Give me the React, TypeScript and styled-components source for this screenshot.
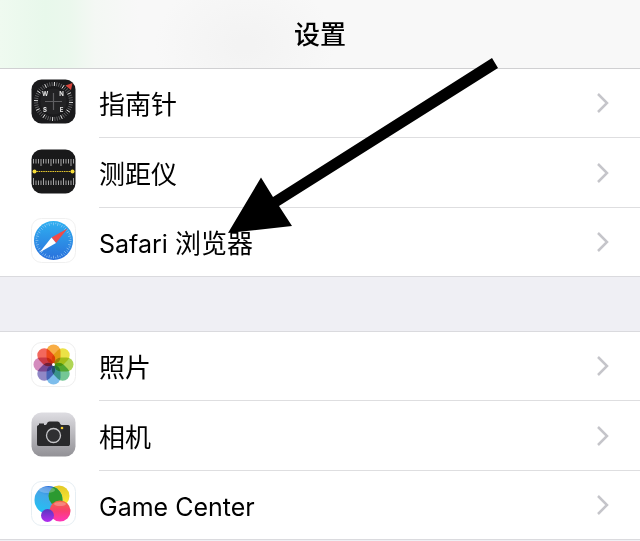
import React from "react";
import styled, { createGlobalStyle } from "styled-components";

const GlobalStyle = createGlobalStyle`
  * { box-sizing: border-box; }
  body {
    margin: 0;
    background: #efeff4;
    color: #000;
    font-family: Inter, "Noto Sans CJK SC", sans-serif;
  }
`;

const Page = styled.main`
  position: relative;
  min-height: 100vh;
  overflow: hidden;
`;

const NavBar = styled.header`
  display: flex;
  align-items: center;
  justify-content: center;
  height: 69px;
  padding-top: 2px;
  border-bottom: 1px solid #d0d0d2;
  background:
    radial-gradient(ellipse 90px 70px at 245px 45px, #f3f3f3 10%, rgba(243, 243, 243, 0) 100%),
    linear-gradient(90deg, #effaf0 0, #e8f8eb 45px, #ebf8ed 70px, #f4f8f4 95px, #f8f8f8 140px);
`;

const Title = styled.h1`
  margin: 0;
  font-size: 26px;
  line-height: 36px;
  font-weight: 500;
`;

const Section = styled.ul`
  margin: 0;
  padding: 0;
  list-style: none;
  background: #fff;
  border-bottom: 1px solid #dadade;

  & + & {
    margin-top: 54px;
    border-top: 1px solid #dadade;
  }
`;

const Row = styled.a`
  display: flex;
  align-items: center;
  padding-left: 31px;
  color: inherit;
  text-decoration: none;
`;

const IconSlot = styled.span`
  display: flex;
  width: 68px;
  padding-bottom: 4px;
`;

const RowBody = styled.span<{ $last: boolean }>`
  flex: 1;
  display: flex;
  align-items: center;
  justify-content: space-between;
  height: ${(p) => (p.$last ? 68 : 69)}px;
  padding-right: 31px;
  border-bottom: ${(p) => (p.$last ? "0" : "1px solid #dedee0")};

  li:nth-child(2) & {
    height: 70px;
  }
`;

const Label = styled.span`
  padding-top: 4px;
  font-size: 26px;
  line-height: 36px;
`;

const Latin = styled.span`
  font-size: 25px;
`;

const Pointer = styled.svg`
  position: absolute;
  left: 228px;
  top: 57px;
  pointer-events: none;
`;

const AppIcon = ({ children }: { children: React.ReactNode }) => (
  <svg width="45" height="45" viewBox="0 0 45 45" aria-hidden="true">
    {children}
  </svg>
);

const Tile = ({ fill = "#fff", stroke = "none" }: { fill?: string; stroke?: string }) => (
  <rect x="0.5" y="0.5" width="44" height="44" rx="10" fill={fill} stroke={stroke} />
);

const steps = (n: number) => Array.from({ length: n }, (_, i) => i);

const CompassIcon = () => (
  <AppIcon>
    <Tile fill="#1a1a1c" />
    <circle cx="22.5" cy="22.5" r="13" fill="#222224" />
    {steps(48).map((i) => (
      <path
        key={i}
        d="M22.5 3v4"
        stroke={i % 4 === 0 ? "#eee" : "#88888a"}
        strokeWidth={i % 4 === 0 ? 0.9 : 0.6}
        transform={`rotate(${i * 7.5 + 3} 22.5 22.5)`}
      />
    ))}
    <path d="M22.5 14v17M14 22.5h17" stroke="#5f5f62" strokeWidth="1.2" />
    <path d="M41.5 4l-1.5 7-5.5-4.5z" fill="#d8453c" />
    <g fill="#e8e8e8" fontSize="6" fontWeight="700" textAnchor="middle">
      <text x="14" y="16.5">W</text>
      <text x="30.5" y="16.5">N</text>
      <text x="14" y="33">S</text>
      <text x="30.5" y="33">E</text>
    </g>
  </AppIcon>
);

const MeasureIcon = () => (
  <AppIcon>
    <Tile fill="#19191a" />
    {steps(17).map((i) => (
      <path
        key={i}
        d={`M${2.5 + i * 2.5} 10v${i % 4 === 3 ? 7 : 4.5}M${2.5 + i * 2.5} 36v${i % 4 === 0 ? -7 : -4.5}`}
        stroke="#b4b4b4"
        strokeWidth="0.9"
      />
    ))}
    <path d="M3 22.5h39" stroke="#e3c62d" strokeWidth="1.2" strokeDasharray="1.6 .7" />
    <circle cx="3.5" cy="22.5" r="2" fill="#f5dc38" />
    <circle cx="41.5" cy="22.5" r="2" fill="#f5dc38" />
  </AppIcon>
);

const SafariIcon = () => (
  <AppIcon>
    <defs>
      <linearGradient id="safari" x1="0" y1="0" x2="0" y2="1">
        <stop offset="0" stopColor="#2fb0f0" />
        <stop offset="1" stopColor="#2a70dc" />
      </linearGradient>
    </defs>
    <Tile stroke="#f0f0f0" />
    <circle cx="22.5" cy="22.5" r="19.5" fill="url(#safari)" />
    {steps(48).map((i) => (
      <path
        key={i}
        d={`M22.5 4.5v${i % 2 ? 1.5 : 2.8}`}
        stroke="#a5d2f6"
        strokeWidth="0.6"
        transform={`rotate(${i * 7.5} 22.5 22.5)`}
      />
    ))}
    <path d="M36.5 10.5L20.5 19.5l4.5 5.5z" fill="#ef4b48" />
    <path d="M8.5 34.5l12-15 4.5 5.5z" fill="#fff" />
  </AppIcon>
);

const petals = ["#f8ad45", "#ece246", "#b0d655", "#74c795", "#7dbdec", "#9087c6", "#d48bbd", "#f3685d"];

const PhotosIcon = () => (
  <AppIcon>
    <Tile stroke="#eeeeee" />
    <g style={{ isolation: "isolate" }}>
      {petals.map((color, i) => (
        <rect
          key={color}
          x="15.5"
          y="2.5"
          width="14"
          height="19.5"
          rx="7"
          fill={color}
          transform={`rotate(${i * 45} 22.5 22.5)`}
          style={{ mixBlendMode: "multiply" }}
        />
      ))}
    </g>
    <circle cx="22.5" cy="22.5" r="1.5" fill="#fff" />
  </AppIcon>
);

const CameraIcon = () => (
  <AppIcon>
    <defs>
      <linearGradient id="camera" x1="0" y1="0" x2="0" y2="1">
        <stop offset="0" stopColor="#dedde2" />
        <stop offset="1" stopColor="#929196" />
      </linearGradient>
    </defs>
    <Tile fill="url(#camera)" />
    <path
      d="M8 13v-1.5h5V13h1.500c1.500 0 1.500-3.500 4-3.500h8c2.500 0 2.500 3.500 4 3.500H37c1.500 0 2 1 2 2v17c0 1.500-1 2-2 2H8c-1.500 0-2-1-2-2V15c0-1 .5-2 2-2z"
      fill="#29292b"
    />
    <circle cx="22.5" cy="23.5" r="7" fill="#303032" stroke="#c5c5c8" strokeWidth="1.3" />
    <circle cx="31" cy="16" r="1.3" fill="#f5cf31" />
  </AppIcon>
);

const GameCenterIcon = () => (
  <AppIcon>
    <defs>
      <linearGradient id="blueBall" x1="0.7" y1="0" x2="0.3" y2="1">
        <stop offset="0" stopColor="#2868d8" />
        <stop offset="0.4" stopColor="#43a7e8" />
        <stop offset="1" stopColor="#20c3f4" />
      </linearGradient>
      <linearGradient id="yellowBall" x1="0" y1="0" x2="0" y2="1">
        <stop offset="0" stopColor="#e2c928" />
        <stop offset="1" stopColor="#ffef36" />
      </linearGradient>
      <linearGradient id="pinkBall" x1="0" y1="0" x2="0" y2="1">
        <stop offset="0" stopColor="#f16d42" />
        <stop offset="0.5" stopColor="#fa3e70" />
        <stop offset="1" stopColor="#ff35b9" />
      </linearGradient>
      <linearGradient id="purpleBall" x1="0" y1="0" x2="0" y2="1">
        <stop offset="0" stopColor="#5936bf" />
        <stop offset="1" stopColor="#b22cf0" />
      </linearGradient>
      <clipPath id="blueClip">
        <circle cx="17.5" cy="19" r="14" />
      </clipPath>
    </defs>
    <Tile stroke="#e6eef3" />
    <circle cx="28" cy="15" r="10.5" fill="url(#yellowBall)" />
    <circle cx="17.5" cy="19" r="14" fill="url(#blueBall)" />
    <circle cx="28" cy="15" r="10.5" fill="#2c9a30" clipPath="url(#blueClip)" />
    <circle cx="29" cy="30" r="10.5" fill="url(#pinkBall)" />
    <circle cx="16.5" cy="34.5" r="6.5" fill="url(#purpleBall)" />
    <ellipse cx="16" cy="9" rx="8" ry="3" fill="#fff" fillOpacity="0.25" />
    <ellipse cx="29" cy="23" rx="6" ry="2" fill="#fff" fillOpacity="0.25" />
  </AppIcon>
);

const Chevron = () => (
  <svg width="13" height="22" viewBox="0 0 13 22" fill="none" aria-hidden="true">
    <path d="M2 2l9 9-9 9" stroke="#c5c5ca" strokeWidth="2.5" />
  </svg>
);

const sections = [
  [
    { id: "compass", label: "指南针", Icon: CompassIcon },
    { id: "measure", label: "测距仪", Icon: MeasureIcon },
    { id: "safari", label: <><Latin>Safari </Latin>浏览器</>, Icon: SafariIcon },
  ],
  [
    { id: "photos", label: "照片", Icon: PhotosIcon },
    { id: "camera", label: "相机", Icon: CameraIcon },
    { id: "game-center", label: <Latin>Game Center</Latin>, Icon: GameCenterIcon },
  ],
];

export default function App() {
  return (
    <Page lang="zh-CN">
      <GlobalStyle />
      <NavBar>
        <Title>设置</Title>
      </NavBar>
      {sections.map((rows, s) => (
        <Section key={s}>
          {rows.map(({ id, label, Icon }, i) => (
            <li key={id}>
              <Row href={`#${id}`}>
                <IconSlot>
                  <Icon />
                </IconSlot>
                <RowBody $last={i === rows.length - 1}>
                  <Label>{label}</Label>
                  <Chevron />
                </RowBody>
              </Row>
            </li>
          ))}
        </Section>
      ))}
      <Pointer width="271" height="177" viewBox="0 0 271 177" aria-hidden="true">
        <path d="M0 176L33 120.5L45 140L264 1L270 11L51 149L64 169z" />
      </Pointer>
    </Page>
  );
}
